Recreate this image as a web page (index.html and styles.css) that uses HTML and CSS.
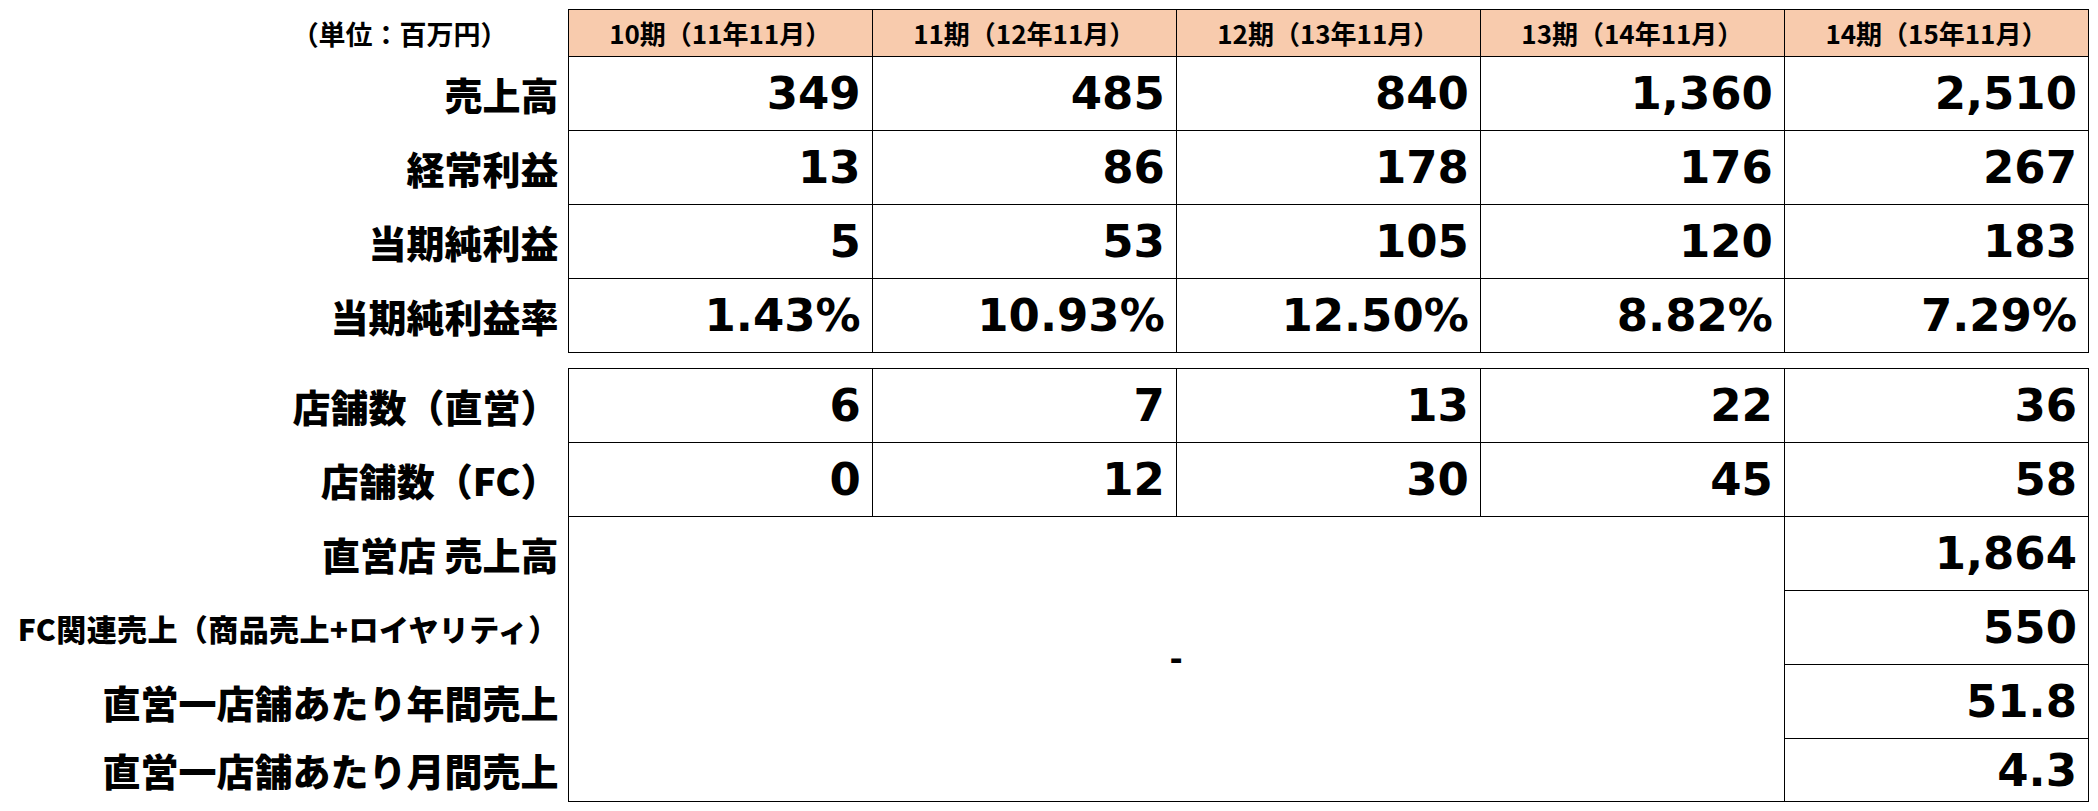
FILE: index.html
```html
<!DOCTYPE html>
<html lang="ja">
<head>
<meta charset="utf-8">
<title>業績推移</title>
<link rel="stylesheet" href="styles.css">
</head>
<body>
<div class="page">
  <table class="fin fin-top">
    <colgroup>
      <col class="c-label"><col class="c-val"><col class="c-val"><col class="c-val"><col class="c-val"><col class="c-val">
    </colgroup>
    <thead>
      <tr class="row-head">
        <th class="label unit">（単位：百万円）</th>
        <th class="period">10期（11年11月）</th>
        <th class="period">11期（12年11月）</th>
        <th class="period">12期（13年11月）</th>
        <th class="period">13期（14年11月）</th>
        <th class="period">14期（15年11月）</th>
      </tr>
    </thead>
    <tbody>
      <tr class="row">
        <th class="label">売上高</th>
        <td class="num">349</td><td class="num">485</td><td class="num">840</td><td class="num">1,360</td><td class="num">2,510</td>
      </tr>
      <tr class="row">
        <th class="label">経常利益</th>
        <td class="num">13</td><td class="num">86</td><td class="num">178</td><td class="num">176</td><td class="num">267</td>
      </tr>
      <tr class="row">
        <th class="label">当期純利益</th>
        <td class="num">5</td><td class="num">53</td><td class="num">105</td><td class="num">120</td><td class="num">183</td>
      </tr>
      <tr class="row">
        <th class="label">当期純利益率</th>
        <td class="num">1.43%</td><td class="num">10.93%</td><td class="num">12.50%</td><td class="num">8.82%</td><td class="num">7.29%</td>
      </tr>
    </tbody>
  </table>

  <table class="fin fin-bottom">
    <colgroup>
      <col class="c-label"><col class="c-val"><col class="c-val"><col class="c-val"><col class="c-val"><col class="c-val">
    </colgroup>
    <tbody>
      <tr class="row">
        <th class="label">店舗数（直営）</th>
        <td class="num">6</td><td class="num">7</td><td class="num">13</td><td class="num">22</td><td class="num">36</td>
      </tr>
      <tr class="row">
        <th class="label">店舗数（FC）</th>
        <td class="num">0</td><td class="num">12</td><td class="num">30</td><td class="num">45</td><td class="num">58</td>
      </tr>
      <tr class="row">
        <th class="label">直営店 売上高</th>
        <td class="dash" colspan="4" rowspan="4">-</td>
        <td class="num">1,864</td>
      </tr>
      <tr class="row">
        <th class="label small">FC関連売上（商品売上+ロイヤリティ）</th>
        <td class="num">550</td>
      </tr>
      <tr class="row">
        <th class="label">直営一店舗あたり年間売上</th>
        <td class="num">51.8</td>
      </tr>
      <tr class="row row-last">
        <th class="label">直営一店舗あたり月間売上</th>
        <td class="num">4.3</td>
      </tr>
    </tbody>
  </table>
</div>
</body>
</html>
```

FILE: styles.css
```css
html, body {
  margin: 0;
  padding: 0;
  background: #ffffff;
}

.page {
  padding-top: 9px;
  width: 2089px;
}

.fin {
  border-collapse: collapse;
  table-layout: fixed;
  width: 2089px;
}

.fin-bottom {
  margin-top: 15px;
}

.c-label { width: 568px; }
.c-val { width: 304px; }

.fin td,
.fin th.period {
  border: 1px solid #000;
  padding: 0;
}

.row-head { height: 47px; }
.row { height: 74px; }
.row-last { height: 63px; }

.label {
  font-family: "Noto Sans CJK JP", sans-serif;
  font-weight: 900;
  font-size: 38px;
  line-height: 1;
  text-align: right;
  padding: 0 9px 0 0;
  white-space: nowrap;
  color: #000;
  border: none;
}

.label.small {
  font-size: 30px;
  font-weight: 900;
  letter-spacing: 0.4px;
}

.label.unit {
  font-size: 27px;
  font-weight: 700;
  padding-right: 60px;
}

.period {
  background: #f8cbad;
  font-family: "Noto Sans CJK JP", sans-serif;
  font-weight: 700;
  font-size: 26px;
  line-height: 1;
  text-align: center;
  color: #000;
  white-space: nowrap;
}

.num {
  font-family: "DejaVu Sans", sans-serif;
  font-weight: 700;
  font-size: 45px;
  line-height: 1;
  text-align: right;
  padding-right: 11px !important;
  color: #000;
  white-space: nowrap;
}

.dash {
  font-family: "DejaVu Sans", sans-serif;
  font-weight: 700;
  font-size: 32px;
  text-align: center;
  vertical-align: middle;
  color: #000;
}
```
